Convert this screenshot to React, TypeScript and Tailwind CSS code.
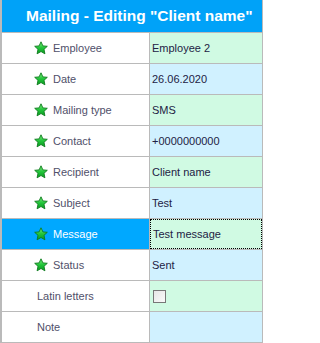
const rows = [
  { label: "Employee", value: "Employee 2", star: true },
  { label: "Date", value: "26.06.2020", star: true },
  { label: "Mailing type", value: "SMS", star: true },
  { label: "Contact", value: "+0000000000", star: true },
  { label: "Recipient", value: "Client name", star: true },
  { label: "Subject", value: "Test", star: true },
  { label: "Message", value: "Test message", star: true, selected: true },
  { label: "Status", value: "Sent", star: true },
  { label: "Latin letters", value: "", star: false, checkbox: true },
  { label: "Note", value: "", star: false },
];

function Star() {
  return (
    <svg width="14" height="14" viewBox="0 0 14 14" className="shrink-0">
      <defs>
        <linearGradient id="starFill" x1="0" y1="0" x2="0" y2="1">
          <stop offset="0" stopColor="#7cf07c" />
          <stop offset="0.5" stopColor="#22c53a" />
          <stop offset="1" stopColor="#0a9a22" />
        </linearGradient>
      </defs>
      <polygon
        points="7,0.8 8.9,4.9 13.3,5.3 10,8.3 10.9,12.8 7,10.5 3.1,12.8 4,8.3 0.7,5.3 5.1,4.9"
        fill="url(#starFill)"
        stroke="#0c7a1c"
        strokeWidth="0.9"
        strokeLinejoin="round"
      />
    </svg>
  );
}

export default function App() {
  return (
    <div
      className="w-[263px] h-[343px] bg-white border-l-2 border-r border-b border-[#bababa] overflow-hidden"
      style={{ fontFamily: '"Liberation Sans", Arial, sans-serif' }}
    >
      {/* Title */}
      <div className="h-[32px] bg-[#00a2f8] flex items-center pl-[24px]">
        <span className="text-white font-bold text-[15.5px] whitespace-nowrap">
          Mailing - Editing "Client name"
        </span>
      </div>

      {/* Grid */}
      {rows.map((r, i) => {
        const valueBg = i % 2 === 0 ? "bg-[#d0fae3]" : "bg-[#d0f1ff]";
        return (
          <div key={r.label} className="h-[31px] flex border-t border-[#bababa]">
            <div
              className={
                "w-[147px] flex items-center text-[11px] " +
                (r.selected ? "bg-[#00a8ff] text-white " : "text-[#50506a] ") +
                (r.star ? "pl-[32px] gap-[5px]" : "pl-[35px]")
              }
            >
              {r.star && <Star />}
              <span>{r.label}</span>
            </div>
            <div className={"flex-1 border-l border-[#bababa] " + valueBg}>
              <div
                className={
                  "h-full flex items-center pl-[2px] text-[11px] text-[#222244] " +
                  (r.selected ? "border border-dotted border-black pl-[1px]" : "")
                }
              >
                {r.checkbox ? (
                  <div className="ml-[1px] w-[13px] h-[13px] border border-[#777] bg-gradient-to-br from-[#e6e6e6] to-[#fafafa]" />
                ) : (
                  <span>{r.value}</span>
                )}
              </div>
            </div>
          </div>
        );
      })}
    </div>
  );
}
